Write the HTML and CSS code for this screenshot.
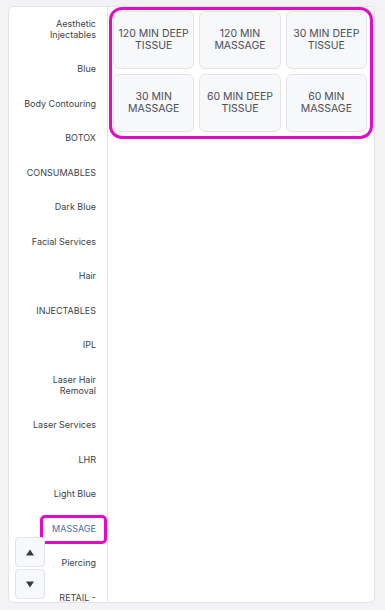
FILE: index.html
```html
<!DOCTYPE html>
<html lang="en">
<head>
	<meta charset="UTF-8">
	<title>Services</title>
	<link rel="stylesheet" href="styles.css">
</head>
<body>
	<div class="panel">
		<div class="sidebar">
			<ul class="cats">
				<li>Aesthetic Injectables</li>
				<li>Blue</li>
				<li>Body Contouring</li>
				<li>BOTOX</li>
				<li>CONSUMABLES</li>
				<li>Dark Blue</li>
				<li>Facial Services</li>
				<li>Hair</li>
				<li>INJECTABLES</li>
				<li>IPL</li>
				<li>Laser Hair Removal</li>
				<li>Laser Services</li>
				<li>LHR</li>
				<li>Light Blue</li>
				<li class="cur">MASSAGE</li>
				<li>Piercing</li>
				<li>RETAIL -</li>
			</ul>
			<!-- 上下滚动按钮 -->
			<div class="scroll-btns">
				<button class="arrow">
					<svg width="8" height="7" viewBox="0 0 8 7"><polygon points="4,0.5 8,6.5 0,6.5" fill="#3a3a3a"/></svg>
				</button>
				<button class="arrow">
					<svg width="8" height="7" viewBox="0 0 8 7"><polygon points="0,0.5 8,0.5 4,6.5" fill="#3a3a3a"/></svg>
				</button>
			</div>
		</div>
		<div class="main">
			<div class="highlight">
				<div class="tiles">
					<div class="tile">120 MIN DEEP TISSUE</div>
					<div class="tile">120 MIN MASSAGE</div>
					<div class="tile">30 MIN DEEP TISSUE</div>
					<div class="tile">30 MIN MASSAGE</div>
					<div class="tile">60 MIN DEEP TISSUE</div>
					<div class="tile">60 MIN MASSAGE</div>
				</div>
			</div>
		</div>
	</div>
</body>
</html>
```
FILE: styles.css
```css
*{
	padding: 0;
	margin: 0;
	box-sizing: border-box;
}
ul {
	list-style: none;
}
body {
	background: #f3f3f5;
	font-family: Inter, "Liberation Sans", sans-serif;
}
.panel {
	margin: 6px 10px 0 8px;
	height: 597px;
	background: #fff;
	border: 1px solid #e4e4e8;
	border-radius: 6px;
	display: flex;
	overflow: hidden;
}
.sidebar {
	width: 99px;
	flex: none;
	border-right: 1px solid #e4e4e8;
	position: relative;
	overflow: hidden;
}
.cats {
	margin-top: -1px;
}
.cats li {
	font-size: 9px;
	line-height: 11px;
	color: #3c3f46;
	text-align: right;
	padding: 11.75px 11px 11.75px 10px;
	position: relative;
}
.cats li.cur {
	color: #4b6ea6;
}
.cats li.cur::after {
	content: '';
	position: absolute;
	left: 31px;
	right: 0;
	top: 4px;
	bottom: 2px;
	border: 3px solid #e30bc6;
	border-radius: 5px;
}
.scroll-btns {
	position: absolute;
	left: 6px;
	bottom: 3px;
	display: flex;
	flex-direction: column;
	gap: 2px;
}
.arrow {
	width: 30px;
	height: 30px;
	background: #f7f8fa;
	border: 1px solid #e2e4e8;
	border-radius: 4px;
	display: flex;
	align-items: center;
	justify-content: center;
}
.main {
	flex: 1;
	padding: 0 1px;
}
.highlight {
	border: 3px solid #e30bc6;
	border-radius: 13px;
	padding: 1px 3px 4px 1px;
}
.tiles {
	display: grid;
	grid-template-columns: repeat(3, 1fr);
	grid-auto-rows: 58px;
	gap: 5px 5px;
}
.tile {
	background: #f7f8fa;
	border: 1px solid #e2e4e8;
	border-radius: 6px;
	display: flex;
	align-items: center;
	justify-content: center;
	text-align: center;
	font-size: 10.5px;
	line-height: 12.5px;
	color: #4a4d55;
	padding: 0 4px;
}
```
